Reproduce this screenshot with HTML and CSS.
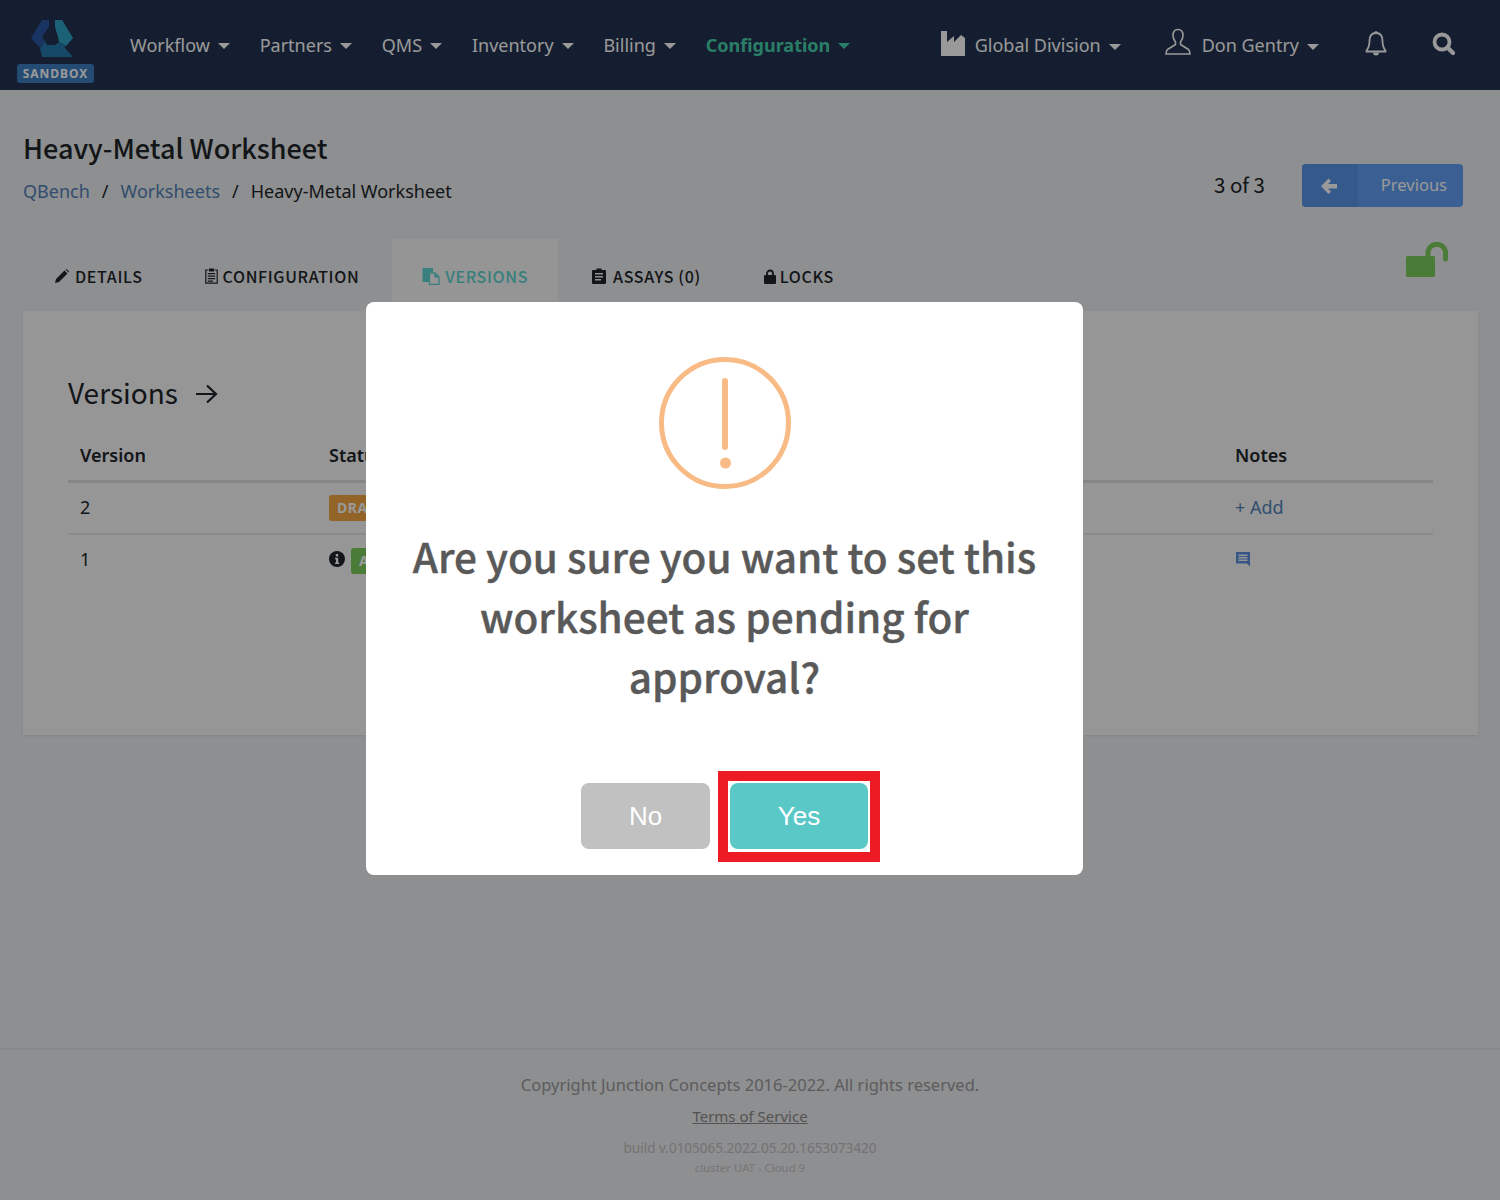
FILE: index.html
```html
<!DOCTYPE html>
<html lang="en">
<head>
<meta charset="utf-8">
<title>Heavy-Metal Worksheet</title>
<link rel="stylesheet" href="styles.css">
</head>
<body>
<div class="page">
<nav class="nav">
  <div class="brand">
    <svg class="logo" viewBox="0 0 42 38" width="42" height="38">
      <path fill="#2a56a6" d="M11 0H18V7L11 17L14 21L9 28L0 18Z"/>
      <path fill="#2fa3c6" d="M24 0H31L42 18L35 26L28 22L27 17L24 7Z"/>
      <path fill="#2679ac" d="M9 28L14 21L16 25H24L28 22L35 26L33 27L42 37H11Z"/>
    </svg>
    <span class="sandbox">SANDBOX</span>
  </div>
  <ul class="menu">
    <li>Workflow<i class="caret"></i></li>
    <li>Partners<i class="caret"></i></li>
    <li>QMS<i class="caret"></i></li>
    <li>Inventory<i class="caret"></i></li>
    <li>Billing<i class="caret"></i></li>
    <li class="menu-active">Configuration<i class="caret"></i></li>
  </ul>
  <div class="nav-right">
    <span class="division">
      <svg class="ico-factory" viewBox="0 0 26 25" width="26" height="25"><path fill="currentColor" d="M1 0H7V11L14 5V11L20 5L21 4L25 7V25H1Z"/></svg>
      Global Division<i class="caret"></i>
    </span>
    <span class="user">
      <svg class="ico-user" viewBox="0 0 26 28" width="26" height="28" fill="none" stroke="currentColor" stroke-width="1.6"><path d="M13 1.5C9.5 1.5 8 4 8 7.5C8 10.5 9.5 12.5 10.5 14V16.5L2.5 21.5C1.5 22.2 1.2 24 1 26H25C24.8 24 24.5 22.2 23.5 21.5L15.5 16.5V14C16.5 12.5 18 10.5 18 7.5C18 4 16.5 1.5 13 1.5Z"/></svg>
      Don Gentry<i class="caret"></i>
    </span>
    <svg class="ico-bell" viewBox="0 0 22 26" width="22" height="26"><path fill="none" stroke="currentColor" stroke-width="1.8" d="M11 3C6.5 3 4.5 6.500 4.500 11C4.500 16 3.500 18 1.500 20.500V21.500H20.500V20.500C18.500 18 17.500 16 17.500 11C17.500 6.500 15.500 3 11 3Z"/><path fill="currentColor" d="M9.500 2.500A1.500 1.500 0 0 1 12.500 2.500V4H9.500ZM8 22.500H14A3 3 0 0 1 8 22.500Z"/></svg>
    <svg class="ico-search" viewBox="0 0 24 24" width="24" height="24" fill="none" stroke="currentColor"><circle cx="10" cy="10" r="7.500" stroke-width="3.800"/><path stroke-width="4.200" stroke-linecap="round" d="M15.500 15.500L21 21"/></svg>
  </div>
</nav>

<main class="main">
  <header class="head">
    <div>
      <h1 class="title">Heavy-Metal Worksheet</h1>
      <div class="crumbs"><a>QBench</a><span class="sep">/</span><a>Worksheets</a><span class="sep">/</span><span>Heavy-Metal Worksheet</span></div>
    </div>
    <div class="pager">
      <span class="count">3 of 3</span>
      <span class="prev">
        <span class="prev-icon"><svg viewBox="0 0 16 16" width="16" height="16"><path fill="currentColor" d="M7.500 0.500L10 3L7 6H16V10.500H7L10 13.500L7.500 16L0 8.200Z"/></svg></span>
        <span class="prev-label">Previous</span>
      </span>
    </div>
  </header>

  <div class="tabs-row">
    <div class="tabs">
      <span class="tab tab-1"><svg class="tab-ico" viewBox="0 0 14 14" width="14" height="14"><path fill="currentColor" d="M0 14L1 10L9.500 1.500L12.500 4.500L4 13ZM10.500 0.500L11.500 0L14 2.500L13.500 3.500Z"/></svg>DETAILS</span>
      <span class="tab tab-2"><svg class="tab-ico-2" viewBox="0 0 13 16" width="13" height="16"><path fill="none" stroke="currentColor" stroke-width="1.200" d="M3.500 2H.8V15.200H12.200V2H9.500"/><path fill="currentColor" d="M4 0.500H9V3.500H4ZM2.800 5H10.200V6.200H2.800ZM2.800 7.500H10.200V8.700H2.800ZM2.800 10H10.200V11.200H2.800ZM2.800 12.500H8V13.700H2.800Z"/></svg>CONFIGURATION</span>
      <span class="tab tab-active"><svg class="tab-ico-3" viewBox="0 0 18 17" width="18" height="17"><path fill="currentColor" d="M0.500 0H11V4H7V14H0.500Z"/><path fill="none" stroke="currentColor" stroke-width="1.300" d="M7.500 5H13L17 9V16.400H7.500Z"/><path fill="currentColor" d="M12.500 5L17 9.500H12.500Z"/></svg>VERSIONS</span>
      <span class="tab tab-4"><svg class="tab-ico-4" viewBox="0 0 14 16" width="14" height="16"><path fill="currentColor" fill-rule="evenodd" d="M1 2H4.500V0.500H9.500V2H13A1 1 0 0 1 14 3V15A1 1 0 0 1 13 16H1A1 1 0 0 1 0 15V3A1 1 0 0 1 1 2ZM3 5V6.400H11V5ZM3 8V9.400H11V8ZM3 11V12.400H9V11Z"/></svg>ASSAYS (0)</span>
      <span class="tab tab-5"><svg class="tab-ico-5" viewBox="0 0 12 15" width="12" height="15"><path fill="none" stroke="currentColor" stroke-width="1.800" d="M3 7V4.500A3 3 0 0 1 9 4.500V7"/><rect fill="currentColor" y="6" width="12" height="9" rx="1"/></svg>LOCKS</span>
    </div>
    <svg class="lock-open" viewBox="0 0 42 35" width="42" height="35"><rect fill="#7ccf5e" y="14" width="29" height="21" rx="1.500"/><path fill="none" stroke="#7ccf5e" stroke-width="5" stroke-linecap="round" d="M22 14V11A8.500 8.500 0 0 1 39.500 11V17"/></svg>
  </div>

  <section class="panel">
    <h2 class="panel-title">Versions<svg class="arrow" viewBox="0 0 24 22" width="24" height="22" fill="none" stroke="currentColor" stroke-width="2.200"><path d="M2 11H22M13 2.500L22 11L13 19.500"/></svg></h2>
    <table class="table">
      <thead>
        <tr><th class="col-version">Version</th><th class="col-status">Status</th><th></th><th class="col-notes">Notes</th></tr>
      </thead>
      <tbody>
        <tr><td>2</td><td><span class="badge badge-draft">DRAFT</span></td><td></td><td><a class="add">+ Add</a></td></tr>
        <tr><td>1</td><td><svg class="ico-info" viewBox="0 0 16 16" width="16" height="16"><circle cx="8" cy="8" r="8" fill="currentColor"/><path fill="#fff" d="M6.800 3H9.200V5.400H6.800ZM6 6.800H9.200V11.500H10.200V13H6V11.500H7V8.300H6Z"/></svg><span class="badge badge-ok">APPROVED</span></td><td></td><td><svg class="ico-note" viewBox="0 0 16 16" width="16" height="16"><path fill="#5a90e0" fill-rule="evenodd" d="M1 1H15V15.500L12 12.500H1ZM3.500 3.500V5H12.500V3.500ZM3.500 6V7.500H12.500V6ZM3.500 8.500V10H12.500V8.500Z"/></svg></td></tr>
      </tbody>
    </table>
  </section>
</main>

<footer class="footer">
  <p class="copy">Copyright Junction Concepts 2016-2022. All rights reserved.</p>
  <p class="terms"><a>Terms of Service</a></p>
  <p class="build">build v.0105065.2022.05.20.1653073420</p>
  <p class="cluster">cluster UAT - Cloud 9</p>
</footer>
</div>

<div class="overlay">
  <div class="modal">
    <svg class="warn" viewBox="0 0 132 132" width="132" height="132"><circle cx="66" cy="66" r="63.500" fill="none" stroke="#f8bb86" stroke-width="5"/><rect x="63" y="21" width="6" height="72" rx="3" fill="#f8bb86"/><circle cx="66.500" cy="106" r="5.500" fill="#f8bb86"/></svg>
    <h3 class="question">Are you sure you want to set this worksheet as pending for approval?</h3>
    <div class="actions">
      <button class="btn btn-no">No</button>
      <button class="btn btn-yes">Yes</button>
    </div>
  </div>
</div>
</body>
</html>
```

FILE: styles.css
```css
* { box-sizing: border-box; }
html, body { margin: 0; padding: 0; }
body {
  font-family: "Noto Sans", "Open Sans", sans-serif;
  background: #edeef0;
  color: #212529;
  font-size: 18px;
  height: 1200px;
  overflow: hidden;
}
.page { display: flex; flex-direction: column; height: 1200px; }

.nav {
  height: 90px;
  background: #223250;
  display: flex;
  align-items: center;
  color: #fff;
  padding: 0 44px 0 17px;
  flex: none;
}
.brand { width: 77px; display: flex; flex-direction: column; align-items: center; padding-top: 12px; }
.logo { display: block; margin-right: 7px; }
.sandbox {
  display: block;
  margin-top: 6px;
  width: 77px;
  height: 19px;
  line-height: 19px;
  text-align: center;
  font-size: 12px;
  font-weight: 700;
  letter-spacing: 1px;
  background: #3d7ec0;
  border-radius: 3px;
}
.menu { list-style: none; display: flex; gap: 29.850px; margin: 0 0 0 36px; padding: 0; line-height: 24px; }
.menu-active { color: #47d3ad; font-weight: 700; }
.caret {
  display: inline-block;
  width: 0; height: 0;
  margin-left: 8px;
  vertical-align: 3px;
  border-left: 6px solid transparent;
  border-right: 6px solid transparent;
  border-top: 6px solid currentColor;
}
.nav-right { margin-left: auto; display: flex; align-items: center; }
.division { display: flex; align-items: center; }
.ico-factory { margin: -4px 9px 0 0; }
.division .caret, .user .caret { margin-top: 3px; }
.user { display: flex; align-items: center; margin-left: 44px; }
.ico-user { margin: -7px 11px 0 0; }
.ico-bell { margin: -4px 0 0 46px; }
.ico-search { margin: -3px 0 0 45px; }

.main { padding: 0 22px 0 23px; flex: none; }
.head { display: flex; justify-content: space-between; align-items: flex-start; height: 149px; padding-top: 39px; }
.title { margin: 0; font-family: "Noto Sans CJK JP", "Noto Sans", sans-serif; font-size: 27px; font-weight: 500; line-height: 38px; }
.crumbs { margin-top: 9px; line-height: 30px; font-size: 18px; }
.crumbs a { color: #5282b8; }
.sep { margin: 0 12px; }
.pager { display: flex; align-items: center; margin-top: 35px; margin-right: 15px; }
.count { font-family: "Noto Sans CJK JP", "Noto Sans", sans-serif; font-size: 20.500px; margin-right: 37px; margin-top: -3px; }
.prev { display: flex; width: 161px; height: 43px; background: #619ef3; border-radius: 4px; color: #fff; overflow: hidden; }
.prev-icon { width: 56px; display: flex; align-items: center; justify-content: center; background: #5a95e8; padding-right: 3px; }
.prev-label { flex: 1; text-align: right; padding-right: 16px; line-height: 41px; font-size: 16.500px; }

.tabs-row { display: flex; justify-content: space-between; height: 72px; }
.tabs { display: flex; gap: 2px; padding-left: 2px; }
.tab {
  display: flex;
  align-items: center;
  padding: 2px 30px 0;
  font-family: "Noto Sans CJK JP", "Noto Sans", sans-serif;
  font-size: 16px;
  font-weight: 500;
  letter-spacing: 0.650px;
  height: 72px;
  white-space: nowrap;
}
.tab-2 { margin-right: 1px; }
.tab-active { background: #f8f8f8; color: #5ed5d0; margin-right: 2px; }
.tab-4 { margin-right: 1px; }
.tab-ico { margin-right: 6px; }
.tab-ico-2 { margin-right: 5px; }
.tab-ico-3 { margin-right: 5px; }
.tab-ico-4 { margin-right: 7px; }
.tab-ico-5 { margin-right: 4px; }
.lock-open { margin: 3px 30px 0 0; }

.panel { background: #fafafa; height: 424px; padding: 58px 45px 0; box-shadow: 0 1px 2px rgba(0,0,0,.08); }
.panel-title { margin: 0; font-family: "Noto Sans CJK JP", "Noto Sans", sans-serif; font-size: 28px; font-weight: 400; line-height: 46px; display: flex; align-items: center; }
.arrow { margin: 4px 0 0 16px; }
.table { width: 100%; border-collapse: collapse; margin-top: 16px; table-layout: fixed; }
.table th { text-align: left; font-weight: 600; font-size: 18px; padding: 0 12px; height: 50px; border-bottom: 3px solid #dde0e3; }
.table td { padding: 0 12px 2px; height: 53px; border-bottom: 2px solid #e4e6e8; font-size: 18px; vertical-align: middle; }
.table tr:last-child td { border-bottom: none; padding-bottom: 4px; }
.col-version { width: 249px; }
.col-status { width: 200px; }
.col-notes { width: 210px; }
.badge { display: inline-block; height: 26px; line-height: 26px; padding: 0 8px; font-size: 14px; font-weight: 700; color: #fff; border-radius: 3px; letter-spacing: .5px; vertical-align: middle; }
.badge-draft { background: #f5a742; margin-top: 2px; }
.badge-ok { background: #7ccf5e; margin: 4px 0 0 6px; }
.ico-info { vertical-align: middle; }
.add { color: #5282b8; }
.ico-note { vertical-align: middle; margin-top: -5px; }

.footer {
  margin-top: auto;
  height: 152px;
  border-top: 2px solid #dfe1e3;
  text-align: center;
  color: #9a9a9a;
  padding-top: 23px;
}
.footer p { margin: 0; }
.copy { font-size: 16.500px; line-height: 24px; }
.terms { font-size: 15px; line-height: 24px; margin-top: 7px !important; color: #8b8b8b; }
.terms a { text-decoration: underline; }
.build { font-size: 13.500px; line-height: 21px; margin-top: 10px !important; color: #c0c0c0; }
.cluster { font-size: 11.400px; line-height: 18px; color: #c4c4c4; }

.overlay { position: fixed; inset: 0; background: rgba(0,0,0,.4); }
.modal {
  position: absolute;
  left: 366px; top: 302px;
  width: 717px; height: 573px;
  background: #fff;
  border-radius: 8px;
  padding-top: 55px;
  display: flex;
  flex-direction: column;
  align-items: center;
}
.warn { display: block; flex: none; }
.question { margin: 37px 0 0; width: 660px; text-align: center; font-family: "Noto Sans CJK JP", "Noto Sans", sans-serif; font-size: 40.500px; line-height: 60px; font-weight: 500; color: #595959; -webkit-text-stroke: 0.4px #595959; }
.actions { display: flex; gap: 20px; margin-top: 77px; }
.btn { height: 66px; border: 0; border-radius: 8px; font-family: "Liberation Sans", Arial, sans-serif; font-size: 26px; color: #fff; padding: 0; }
.btn-no { width: 129px; background: #c1c1c1; }
.btn-yes { width: 138px; background: #5bc8c8; position: relative; }
.btn-yes::after { content: ""; position: absolute; left: -12px; right: -12px; top: -12px; bottom: -13px; border: 10px solid #ed1c24; }
```
